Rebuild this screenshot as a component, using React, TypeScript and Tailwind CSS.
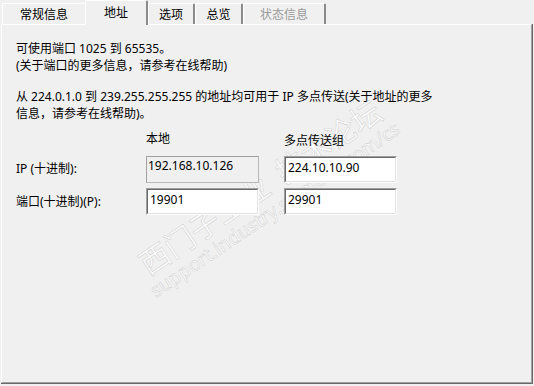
const tabs = [
  { label: "常规信息", w: "w-[83px]", right: false },
  { label: "地址", w: "w-[63px]", selected: true },
  { label: "选项", w: "w-[47px]", right: true },
  { label: "总览", w: "w-[48px]", right: true },
  { label: "状态信息", w: "w-[83px]", right: true, disabled: true },
];

function EditBox({ value }: { value: string }) {
  return (
    <div className="h-[27px] w-[113px] border-t border-l border-r border-b border-t-[#a0a0a0] border-l-[#a0a0a0] border-r-white border-b-white">
      <div className="h-full border-t border-l border-r border-b border-t-[#696969] border-l-[#696969] border-r-[#e3e3e3] border-b-[#e3e3e3] bg-white pl-[2px] pt-[1px] leading-[17px]">
        {value}
      </div>
    </div>
  );
}

export default function App() {
  return (
    <div className="relative h-[386px] w-[534px] overflow-hidden bg-[#f0f0f0] font-['Noto_Sans','Noto_Sans_CJK_SC',sans-serif] text-[12px] text-black">
      {/* watermark, sits under the dialog content */}
      <div className="pointer-events-none absolute left-[266px] top-[196px] flex -translate-x-1/2 -translate-y-1/2 -rotate-[34deg] flex-col items-center whitespace-nowrap text-[rgba(255,255,255,0.85)] [-webkit-text-stroke:0.6px_rgba(165,165,165,0.45)]">
        <div className="text-[30px] leading-[32px]">
          西门子工业<span className="ml-[14px]">技术论坛</span>
        </div>
        <div className="text-[19px] leading-[20px]">support.industry.siemens.com/cs</div>
      </div>

      <div className="relative">
        {/* tab strip */}
        <div className="flex h-[24px] items-end pl-[2px]">
          {tabs.map((t) =>
            t.selected ? (
              <div
                key={t.label}
                className={`relative z-10 -mb-px flex h-[25px] ${t.w} items-center justify-center rounded-t-[2px] border-t border-l border-r-2 border-t-white border-l-white border-r-[#8a8a8a] bg-[#f0f0f0]`}
              >
                {t.label}
              </div>
            ) : (
              <div
                key={t.label}
                className={`flex h-[21px] ${t.w} items-center justify-center rounded-t-[2px] border-t border-l border-t-white border-l-white pt-[1px] ${
                  t.right ? "border-r-2 border-r-[#8a8a8a]" : ""
                } ${t.disabled ? "text-[#9a9a9a]" : ""}`}
              >
                {t.label}
              </div>
            )
          )}
        </div>

        {/* panel */}
        <div className="ml-[1px] h-[360px] w-[532px] border-r border-b border-r-[#696969] border-b-[#696969]">
          <div className="h-full border-t border-l border-r border-b border-t-white border-l-white border-r-[#a0a0a0] border-b-[#a0a0a0] pl-[14px] pt-[15px] leading-[17px]">
            <p>
              可使用端口 1025 到 65535。
              <br />
              (关于端口的更多信息，请参考在线帮助)
            </p>
            <p className="mt-[14px]">
              从 224.0.1.0 到 239.255.255.255 的地址均可用于 IP 多点传送(关于地址的更多
              <br />
              信息，请参考在线帮助)。
            </p>

            <div className="mt-[8px] flex h-[17px]">
              <div className="w-[130px]" />
              <div className="w-[113px]">本地</div>
              <div className="w-[25px]" />
              <div className="mt-[2px] w-[113px]">多点传送组</div>
            </div>

            <div className="mt-[9px] flex h-[27px] items-center">
              <div className="w-[130px] pb-[3px]">IP (十进制):</div>
              <div className="h-[27px] w-[113px] border border-t-[#a0a0a0] border-l-[#a0a0a0] border-r-[#b9b9b9] border-b-[#b9b9b9] bg-[#f0f0f0] pl-[1px] leading-[17px]">
                192.168.10.126
              </div>
              <div className="w-[25px]" />
              <EditBox value="224.10.10.90" />
            </div>

            <div className="mt-[5px] flex h-[27px] items-center">
              <div className="w-[130px]">端口(十进制)(P):</div>
              <EditBox value="19901" />
              <div className="w-[25px]" />
              <EditBox value="29901" />
            </div>
          </div>
        </div>
      </div>
    </div>
  );
}
